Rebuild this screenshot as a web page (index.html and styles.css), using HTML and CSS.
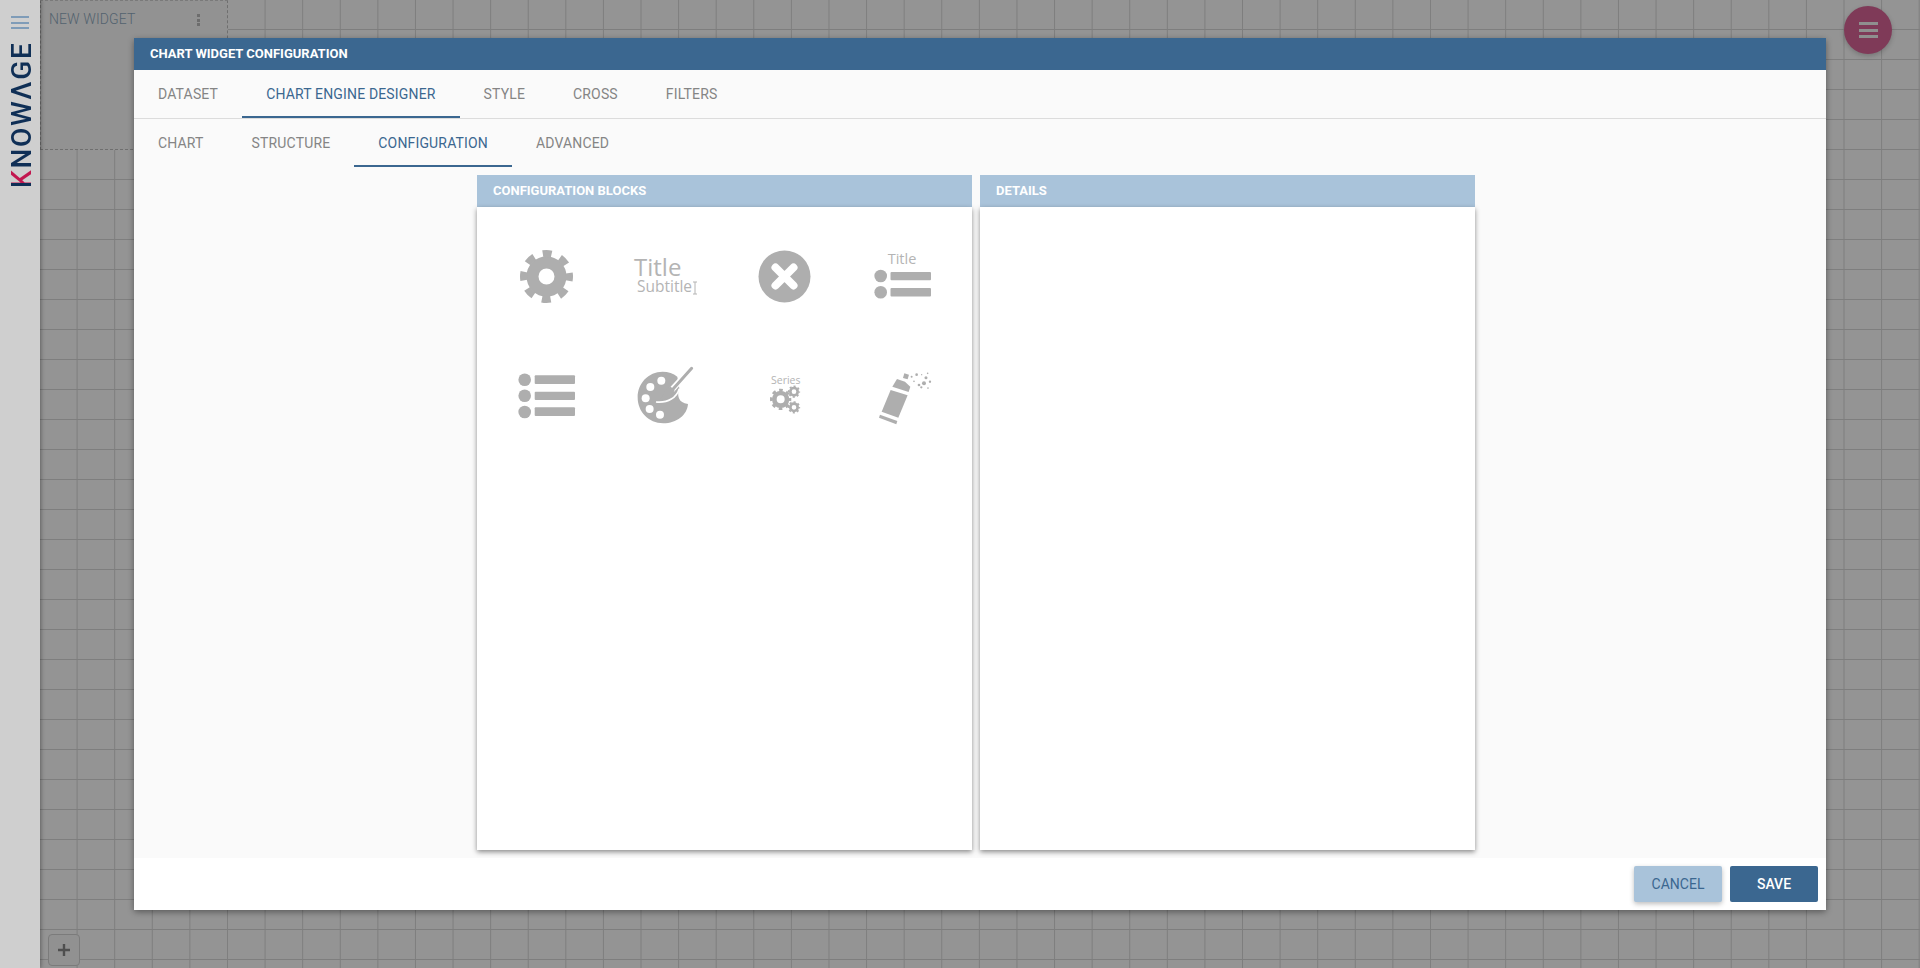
FILE: index.html
```html
<!DOCTYPE html>
<html lang="en">
<head>
    <meta charset="UTF-8">
    <title>Chart widget configuration</title>
    <link rel="stylesheet" href="styles.css">
</head>
<body>
    <div class="page">
        <aside class="sidebar">
            <div class="burger"><i></i><i></i><i></i></div>
            <div class="logo"><span class="logo-k">K</span>NOWΛGE</div>
        </aside>
        <main class="canvas">
            <div class="widget">
                <span class="widget-title">NEW WIDGET</span>
                <span class="kebab"><i></i><i></i><i></i></span>
            </div>
            <div class="fab"><i></i><i></i><i></i></div>
            <div class="add-sheet">
                <svg width="12" height="12" viewBox="0 0 12 12"><path d="M0 6h12M6 0v12" stroke="#4f4f4f" stroke-width="2.4"/></svg>
            </div>
        </main>
    </div>

    <section class="dialog">
        <header class="dialog-bar">CHART WIDGET CONFIGURATION</header>
        <nav class="tabs">
            <a>DATASET</a>
            <a class="active">CHART ENGINE DESIGNER</a>
            <a>STYLE</a>
            <a>CROSS</a>
            <a>FILTERS</a>
        </nav>
        <div class="dialog-body">
            <nav class="tabs sub">
                <a>CHART</a>
                <a>STRUCTURE</a>
                <a class="active">CONFIGURATION</a>
                <a>ADVANCED</a>
            </nav>
            <div class="panels">
                <div class="panel panel-left">
                    <h3>CONFIGURATION BLOCKS</h3>
                    <div class="blocks">
                        <!-- gear -->
                        <svg viewBox="0 0 119 119">
                            <circle cx="59.5" cy="59.5" r="14" fill="none" stroke="#aeaeae" stroke-width="12"/>
                            <circle cx="59.5" cy="59.5" r="23" fill="none" stroke="#aeaeae" stroke-width="7" stroke-dasharray="9 9.06" stroke-dashoffset="4.5"/>
                        </svg>
                        <!-- title / subtitle -->
                        <svg viewBox="0 0 119 119">
                            <text x="28" y="59" class="icon-text" font-size="24">Title</text>
                            <text x="31" y="74.7" class="icon-text" font-size="15.5">Subtitle</text>
                            <path d="M87 65h4M89 65v12M87 77h4" fill="none" stroke="#b4b4b4" stroke-width="1"/>
                        </svg>
                        <!-- close -->
                        <svg viewBox="0 0 119 119">
                            <circle cx="59.5" cy="59.5" r="26" fill="#aeaeae"/>
                            <path d="M50.5 50.5l18 18M68.5 50.5l-18 18" stroke="#fff" stroke-width="8" stroke-linecap="round"/>
                        </svg>
                        <!-- title + list -->
                        <svg viewBox="0 0 119 119">
                            <text x="43.7" y="47" class="icon-text" font-size="14.5">Title</text>
                            <circle cx="36.7" cy="59" r="6.3" fill="#aeaeae"/>
                            <circle cx="36.7" cy="75.3" r="6.3" fill="#aeaeae"/>
                            <rect x="46.5" y="55" width="40.5" height="8.3" rx="1" fill="#aeaeae"/>
                            <rect x="46.5" y="71" width="40.5" height="8.5" rx="1" fill="#aeaeae"/>
                        </svg>
                        <!-- list -->
                        <svg viewBox="0 0 119 119">
                            <circle cx="37.7" cy="43.7" r="6.3" fill="#aeaeae"/>
                            <circle cx="37.7" cy="59.7" r="6.3" fill="#aeaeae"/>
                            <circle cx="37.7" cy="76" r="6.3" fill="#aeaeae"/>
                            <rect x="47.7" y="39.3" width="40.3" height="8.7" rx="1" fill="#aeaeae"/>
                            <rect x="47.7" y="55.7" width="40.3" height="8.3" rx="1" fill="#aeaeae"/>
                            <rect x="47.7" y="71.3" width="40.3" height="8.7" rx="1" fill="#aeaeae"/>
                        </svg>
                        <!-- palette, coordinates taken 3x from the reference -->
                        <svg viewBox="0 0 119 119">
                            <g transform="translate(-126 4) scale(.3333)">
                                <path d="M548 95C565 95 580 100 592 110L598 145C590 165 595 190 624 192C622 225 590 250 550 250C505 250 473 215 473 172C473 130 505 95 548 95Z" fill="#aeaeae"/>
                                <g fill="#fff">
                                    <circle cx="511" cy="141" r="12"/>
                                    <circle cx="544" cy="122" r="12"/>
                                    <circle cx="497" cy="175" r="12"/>
                                    <circle cx="509" cy="207" r="12"/>
                                    <circle cx="540" cy="224" r="12"/>
                                </g>
                                <path d="M635 85L575 150" stroke="#fff" stroke-width="18"/>
                                <path d="M635 85L580 146" stroke="#aeaeae" stroke-width="9" stroke-linecap="round"/>
                                <path d="M598 146C590 172 565 190 528 186" fill="none" stroke="#fff" stroke-width="5"/>
                                <path d="M572 140C554 144 556 165 536 179C558 181 576 170 584 150Z" fill="#aeaeae"/>
                            </g>
                        </svg>
                        <!-- series gears -->
                        <svg viewBox="0 0 119 119">
                            <text x="46" y="47.7" class="icon-text" font-size="10.5">Series</text>
                            <g transform="translate(-5 4) scale(.3333)" fill="none" stroke="#aeaeae">
                                <circle cx="182" cy="178" r="19" stroke-width="14"/>
                                <circle cx="182" cy="178" r="28" stroke-width="8" stroke-dasharray="11 11" stroke-dashoffset="5.5"/>
                                <circle cx="222" cy="155" r="11" stroke-width="8"/>
                                <circle cx="222" cy="155" r="16" stroke-width="5" stroke-dasharray="6.28 6.28" stroke-dashoffset="3.14"/>
                                <circle cx="222" cy="202" r="11" stroke-width="8"/>
                                <circle cx="222" cy="202" r="16" stroke-width="5" stroke-dasharray="6.28 6.28" stroke-dashoffset="3.14"/>
                            </g>
                        </svg>
                        <!-- spray can -->
                        <svg viewBox="0 0 119 119">
                            <g transform="translate(-124 4) scale(.3333)" fill="#aeaeae">
                                <polygon points="512,150 563,166 535,233 485,215"/>
                                <polygon points="517,140 531,117 555,125 571,140 566,156"/>
                                <polygon points="480,224 532,243 529,253 477,233"/>
                                <polygon points="553,100 567,104 563,118 549,114"/>
                                <circle cx="612" cy="130" r="6"/>
                                <circle cx="597" cy="135" r="4"/>
                                <circle cx="618" cy="113" r="4.5"/>
                                <circle cx="590" cy="104" r="4"/>
                                <circle cx="575" cy="110" r="3"/>
                                <circle cx="604" cy="142" r="3.5"/>
                                <circle cx="630" cy="125" r="3.5"/>
                                <circle cx="623" cy="100" r="2.5"/>
                                <circle cx="624" cy="144" r="2.5"/>
                                <circle cx="582" cy="124" r="2.5"/>
                                <circle cx="605" cy="104" r="2"/>
                            </g>
                        </svg>
                    </div>
                </div>
                <div class="panel panel-right">
                    <h3>DETAILS</h3>
                    <div class="blocks"></div>
                </div>
            </div>
        </div>
        <footer class="dialog-actions">
            <button class="btn btn-cancel">CANCEL</button>
            <button class="btn btn-save">SAVE</button>
        </footer>
    </section>
</body>
</html>
```

FILE: styles.css
```css
* {
    box-sizing: border-box;
}
body {
    margin: 0;
    font-family: Roboto, "Liberation Sans", sans-serif;
    overflow: hidden;
}
.page {
    display: flex;
    height: 968px;
}
.sidebar {
    width: 40px;
    flex: none;
    background-color: #cfcfcf;
    display: flex;
    flex-direction: column;
    align-items: center;
    box-shadow: 1px 0 4px rgba(0, 0, 0, 0.35);
    position: relative;
    z-index: 1;
}
.burger {
    margin-top: 16px;
    width: 18px;
}
.burger i {
    display: block;
    height: 2px;
    margin-bottom: 3.5px;
    background-color: #7f9cb8;
}
.logo {
    writing-mode: vertical-rl;
    transform: rotate(180deg);
    height: 145px;
    margin-top: 10px;
    margin-left: 3px;
    font-size: 28px;
    line-height: 22px;
    font-weight: 500;
    color: #0f2f56;
    letter-spacing: 1.7px;
    white-space: nowrap;
}
.logo-k {
    background: linear-gradient(180deg, #0f2f56 26%, #c2174f 26%);
    -webkit-background-clip: text;
    background-clip: text;
    color: transparent;
}
.canvas {
    flex: 1;
    position: relative;
    background-color: #949494;
    background-image:
        linear-gradient(to left, #7e7e7e 1px, transparent 1px),
        linear-gradient(to top, #7e7e7e 1px, transparent 1px);
    background-size: 37.6px 30px;
}
.widget {
    position: absolute;
    left: 0;
    top: 0;
    width: 188px;
    height: 150px;
    background-color: #929292;
    border: 1px dashed #6f6f6f;
    border-top-color: #7a7a7a;
    display: flex;
    justify-content: space-between;
    padding: 10px 27px 0 8px;
}
.widget-title {
    font-size: 14px;
    line-height: 17px;
    font-weight: 300;
    letter-spacing: 0.1px;
    color: #53626f;
}
.kebab {
    padding-top: 3px;
}
.kebab i {
    display: block;
    width: 3px;
    height: 3px;
    margin-bottom: 1.5px;
    background-color: #6d6d6d;
}
.fab {
    position: absolute;
    left: 1804px;
    top: 6px;
    width: 48px;
    height: 48px;
    border-radius: 50%;
    background-color: #7f3a58;
    box-shadow: 0 2px 5px rgba(0, 0, 0, 0.2);
    display: flex;
    flex-direction: column;
    align-items: center;
    justify-content: center;
    gap: 3.5px;
}
.fab i {
    width: 19px;
    height: 3px;
    background-color: #8f8f8f;
}
.add-sheet {
    position: absolute;
    left: 8px;
    top: 934px;
    width: 32px;
    height: 32px;
    border: 1px solid #7b7b7b;
    border-radius: 4px;
    background-color: #919191;
    display: flex;
    align-items: center;
    justify-content: center;
}

.dialog {
    position: absolute;
    left: 134px;
    top: 38px;
    width: 1692px;
    height: 872px;
    z-index: 2;
    display: flex;
    flex-direction: column;
    background-color: #fff;
    border-radius: 2px;
    box-shadow: 0 2px 6px rgba(0, 0, 0, 0.4);
}
.dialog-bar {
    height: 32px;
    flex: none;
    padding-left: 16px;
    background-color: #3b6790;
    color: #fff;
    font-size: 13px;
    line-height: 32px;
    font-weight: 700;
}
.tabs {
    display: flex;
    height: 49px;
    flex: none;
    background-color: #fafafa;
    border-bottom: 1px solid #dcdcdc;
    font-size: 14px;
    letter-spacing: 0.16px;
}
.tabs a {
    padding: 0 24px;
    line-height: 48px;
    color: #858585;
}
.tabs a.active {
    color: #3b6790;
    border-bottom: 2px solid #3b6790;
}
.tabs.sub {
    height: 48px;
    border-bottom: 0;
}
.dialog-body {
    flex: 1;
    display: flex;
    flex-direction: column;
    background-color: #fafafa;
}
.panels {
    flex: 1;
    display: flex;
    gap: 8px;
    padding: 8px 0 8px 343px;
}
.panel {
    display: flex;
    flex-direction: column;
}
.panel-left {
    width: 495px;
}
.panel-right {
    width: 495px;
}
.panel h3 {
    margin: 0;
    height: 32px;
    flex: none;
    padding-left: 16px;
    background-color: #a9c3da;
    color: #fff;
    font-size: 13px;
    line-height: 32px;
    font-weight: 700;
}
.blocks {
    flex: 1;
    display: grid;
    grid-template-columns: repeat(4, 119px);
    grid-auto-rows: 119px;
    padding: 10px 9px 10px 10px;
    background-color: #fff;
    box-shadow: 0 2px 5px rgba(0, 0, 0, 0.45);
}
.blocks svg {
    display: block;
    width: 119px;
    height: 119px;
}
.icon-text {
    font-family: "Open Sans", sans-serif;
    fill: #b4b4b4;
}
.dialog-actions {
    height: 52px;
    flex: none;
    display: flex;
    justify-content: flex-end;
    gap: 8px;
    padding: 8px 8px 8px 0;
    background-color: #fff;
}
.btn {
    width: 88px;
    height: 36px;
    border: 0;
    border-radius: 2px;
    font-family: inherit;
    font-size: 14px;
}
.btn-cancel {
    background-color: #a9c3da;
    color: #3b6790;
    box-shadow: 0 2px 5px rgba(0, 0, 0, 0.26);
}
.btn-save {
    background-color: #3b6790;
    color: #fff;
    font-weight: 500;
}
```
